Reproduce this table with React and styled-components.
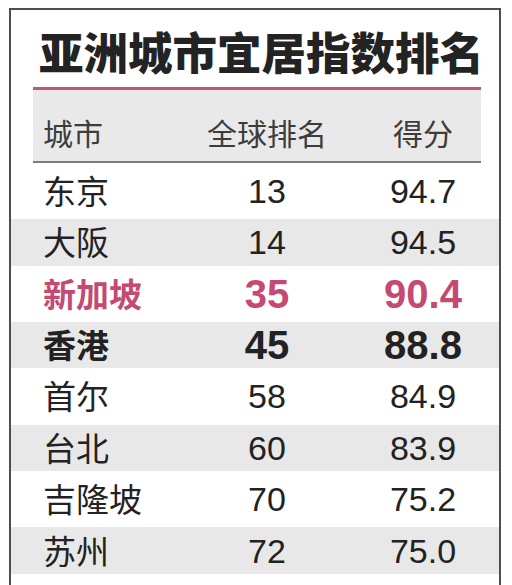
import React from "react";
import styled, { createGlobalStyle } from "styled-components";

const Global = createGlobalStyle`
  html, body { margin: 0; padding: 0; background: #ffffff; }
  body { overflow: hidden; }
`;

const Page = styled.div`
  width: 512px;
  height: 585px;
  padding: 8px 11px 0 9px;
  box-sizing: border-box;
  overflow: hidden;
  background: #fff;
`;

const Frame = styled.div`
  border: 2px solid #4e4e4e;
  border-bottom: none;
  height: 620px;
  display: flex;
  flex-direction: column;
  font-family: "Liberation Sans", "Noto Sans CJK SC", sans-serif;
  color: #222;
`;

const Title = styled.h1`
  margin: 0;
  padding: 17px 0 0 28px;
  font-family: "Noto Sans CJK SC", sans-serif;
  font-weight: 900;
  font-size: 44.5px;
  line-height: 48px;
  letter-spacing: 0;
  color: #232323;
  white-space: nowrap;
`;

const Rule = styled.div`
  margin: 12px 18px 0 22px;
  height: 3px;
  background: #b8587a;
`;

const Grid = styled.div`
  display: grid;
  grid-template-columns: 164px 120px 156px;
  align-items: center;
`;

const HeaderBand = styled(Grid)`
  margin: 0 18px 0 22px;
  padding: 26px 0 13px 10px;
  background: #e9e9e9;
  border-bottom: 2px solid #7c7c7c;
  font-family: "Noto Sans CJK SC", sans-serif;
  font-size: 30px;
  line-height: 32px;
  font-weight: 400;
  color: #3c3c3c;
`;

const HeadCell = styled.div`
  text-align: ${(p) => (p.$left ? "left" : "center")};
  padding-left: ${(p) => (p.$score ? "36px" : "0")};
`;

const Row = styled(Grid)`
  height: ${(p) => (p.$shade ? "47px" : "57px")};
  padding-left: 32px;
  background: ${(p) => (p.$shade ? "#e8e8e8" : "#ffffff")};
  color: ${(p) => (p.$highlight ? "#c44a73" : "#222")};
`;

const Name = styled.div`
  font-family: "Noto Sans CJK SC", sans-serif;
  font-size: 33px;
  line-height: 38px;
  font-weight: ${(p) => (p.$bold ? 700 : 400)};
  margin-top: -2px;
`;

const Num = styled.div`
  font-family: "Liberation Sans", sans-serif;
  text-align: center;
  font-size: ${(p) => (p.$bold ? "40px" : "34px")};
  font-weight: ${(p) => (p.$bold ? 700 : 400)};
  line-height: 40px;
  padding-left: ${(p) => (p.$score ? "36px" : "0")};
`;

const rows = [
  { city: "东京", rank: "13", score: "94.7" },
  { city: "大阪", rank: "14", score: "94.5" },
  { city: "新加坡", rank: "35", score: "90.4", bold: true, highlight: true },
  { city: "香港", rank: "45", score: "88.8", bold: true },
  { city: "首尔", rank: "58", score: "84.9" },
  { city: "台北", rank: "60", score: "83.9" },
  { city: "吉隆坡", rank: "70", score: "75.2" },
  { city: "苏州", rank: "72", score: "75.0" },
];

export default function App() {
  return (
    <>
      <Global />
      <Page>
        <Frame>
          <Title>亚洲城市宜居指数排名</Title>
          <Rule />
          <HeaderBand>
            <HeadCell $left>城市</HeadCell>
            <HeadCell>全球排名</HeadCell>
            <HeadCell $score>得分</HeadCell>
          </HeaderBand>
          {rows.map((r, i) => (
            <Row key={r.city} $shade={i % 2 === 1} $highlight={r.highlight}>
              <Name $bold={r.bold}>{r.city}</Name>
              <Num $bold={r.bold}>{r.rank}</Num>
              <Num $bold={r.bold} $score>{r.score}</Num>
            </Row>
          ))}
          <Row />
        </Frame>
      </Page>
    </>
  );
}
